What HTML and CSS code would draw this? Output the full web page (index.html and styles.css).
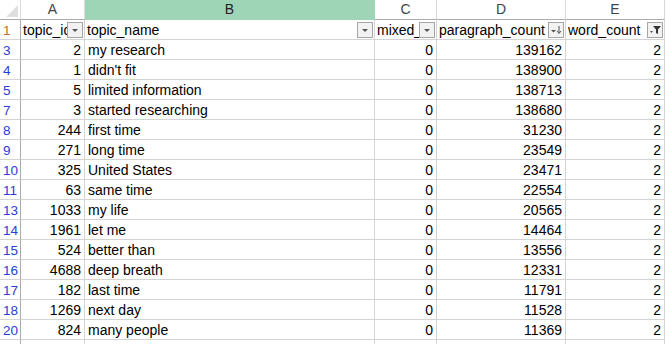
FILE: index.html
```html
<!DOCTYPE html>
<html>
<head>
<meta charset="utf-8">
<link rel="stylesheet" href="styles.css">
</head>
<body>
<div class="sheet">
  <div class="row colhead">
    <div class="corner"><span class="tri"></span></div>
    <div class="ch">A</div>
    <div class="ch sel">B</div>
    <div class="ch">C</div>
    <div class="ch">D</div>
    <div class="ch last">E</div>
  </div>
  <div class="row">
    <div class="rh first">1</div>
    <div class="c hd"><span>topic_id</span><i class="fb"><svg viewBox="0 0 14 14"><path d="M4 6h6l-3 3z" fill="#555"/></svg></i></div>
    <div class="c hd"><span>topic_name</span><i class="fb"><svg viewBox="0 0 14 14"><path d="M4 6h6l-3 3z" fill="#555"/></svg></i></div>
    <div class="c hd"><span>mixed_case</span><i class="fb"><svg viewBox="0 0 14 14"><path d="M4 6h6l-3 3z" fill="#555"/></svg></i></div>
    <div class="c hd"><span>paragraph_count</span><i class="fb"><svg viewBox="0 0 14 14"><path d="M2 7h5l-2.5 2.5z" fill="#555"/><path d="M10 3v7M8 8l2 2.5 2-2.5" stroke="#555" fill="none" stroke-width="1"/></svg></i></div>
    <div class="c hd"><span>word_count</span><i class="fb"><svg viewBox="0 0 14 14"><path d="M2 8h3l-1.5 2z" fill="#555"/><path d="M5 3h8l-3 3.5v4.5l-2-1v-3.5z" fill="#333"/></svg></i></div>
  </div>
  <div class="row"><div class="rh">3</div><div class="c n">2</div><div class="c">my research</div><div class="c n">0</div><div class="c n">139162</div><div class="c n">2</div></div>
  <div class="row"><div class="rh">4</div><div class="c n">1</div><div class="c">didn't fit</div><div class="c n">0</div><div class="c n">138900</div><div class="c n">2</div></div>
  <div class="row"><div class="rh">5</div><div class="c n">5</div><div class="c">limited information</div><div class="c n">0</div><div class="c n">138713</div><div class="c n">2</div></div>
  <div class="row"><div class="rh">7</div><div class="c n">3</div><div class="c">started researching</div><div class="c n">0</div><div class="c n">138680</div><div class="c n">2</div></div>
  <div class="row"><div class="rh">8</div><div class="c n">244</div><div class="c">first time</div><div class="c n">0</div><div class="c n">31230</div><div class="c n">2</div></div>
  <div class="row"><div class="rh">9</div><div class="c n">271</div><div class="c">long time</div><div class="c n">0</div><div class="c n">23549</div><div class="c n">2</div></div>
  <div class="row"><div class="rh">10</div><div class="c n">325</div><div class="c">United States</div><div class="c n">0</div><div class="c n">23471</div><div class="c n">2</div></div>
  <div class="row"><div class="rh">11</div><div class="c n">63</div><div class="c">same time</div><div class="c n">0</div><div class="c n">22554</div><div class="c n">2</div></div>
  <div class="row"><div class="rh">13</div><div class="c n">1033</div><div class="c">my life</div><div class="c n">0</div><div class="c n">20565</div><div class="c n">2</div></div>
  <div class="row"><div class="rh">14</div><div class="c n">1961</div><div class="c">let me</div><div class="c n">0</div><div class="c n">14464</div><div class="c n">2</div></div>
  <div class="row"><div class="rh">15</div><div class="c n">524</div><div class="c">better than</div><div class="c n">0</div><div class="c n">13556</div><div class="c n">2</div></div>
  <div class="row"><div class="rh">16</div><div class="c n">4688</div><div class="c">deep breath</div><div class="c n">0</div><div class="c n">12331</div><div class="c n">2</div></div>
  <div class="row"><div class="rh">17</div><div class="c n">182</div><div class="c">last time</div><div class="c n">0</div><div class="c n">11791</div><div class="c n">2</div></div>
  <div class="row"><div class="rh">18</div><div class="c n">1269</div><div class="c">next day</div><div class="c n">0</div><div class="c n">11528</div><div class="c n">2</div></div>
  <div class="row"><div class="rh">20</div><div class="c n">824</div><div class="c">many people</div><div class="c n">0</div><div class="c n">11369</div><div class="c n">2</div></div>
  <div class="row tail"><div class="rh"></div><div class="c"></div><div class="c"></div><div class="c"></div><div class="c"></div><div class="c"></div></div>
</div>
</body>
</html>
```
FILE: styles.css
```css
html, body {
  margin: 0;
  padding: 0;
  background: #ffffff;
  overflow: hidden;
}
.sheet {
  width: 666px;
  height: 344px;
  overflow: hidden;
  font-family: "Liberation Sans", Arial, sans-serif;
  font-size: 14px;
  color: #000;
}
.row {
  display: grid;
  grid-template-columns: 21px 64px 290px 62px 129px 99px 1px;
  height: 20px;
}
.row > div {
  box-sizing: border-box;
  height: 20px;
  border-right: 1px solid #d4d4d4;
  border-bottom: 1px solid #d4d4d4;
  overflow: hidden;
  white-space: nowrap;
  padding-top: 2px;
  line-height: 17px;
}
.colhead > div {
  background: #ffffff;
  border-right: 1px solid #dadada;
  border-bottom: 1px solid #ababab;
  color: #444;
  text-align: center;
  font-size: 14px;
  padding-top: 1px;
}
.colhead .ch.sel {
  background: #9fd5b7;
  color: #222;
  border-bottom: 1px solid #9fd5b7;
  border-right: 1px solid #9fd5b7;
}
.colhead .ch.last {
  box-shadow: inset -2px 0 0 #ffffff;
}
.corner {
  position: relative;
}
.tri {
  position: absolute;
  right: 2px;
  bottom: 2px;
  width: 0;
  height: 0;
  border-left: 12px solid transparent;
  border-bottom: 12px solid #dfdfdf;
}
.row > .rh {
  border-right: 1px solid #ababab;
  border-bottom: 1px solid #d4d4d4;
  color: #2b3bd6;
  font-size: 13.5px;
  text-align: left;
  padding-left: 3px;
  background: #fff;
}
.row > .rh.first {
  color: #c3711b;
}
.c {
  padding-left: 3px;
  padding-right: 3px;
}
.c.n {
  text-align: right;
}
.row > .c.hd {
  display: flex;
  align-items: center;
  padding: 0 1px 0 2px;
}
.c.hd span {
  flex: 1;
  overflow: hidden;
  white-space: nowrap;
  padding-top: 2px;
}
.fb {
  flex: none;
  width: 16px;
  height: 16px;
  box-sizing: border-box;
  border: 1px solid #a6a6a6;
  background: #f2f2f2;
  display: block;
}
.fb svg {
  display: block;
  width: 14px;
  height: 14px;
}
.row.tail > div {
  border-bottom: none;
}
```
